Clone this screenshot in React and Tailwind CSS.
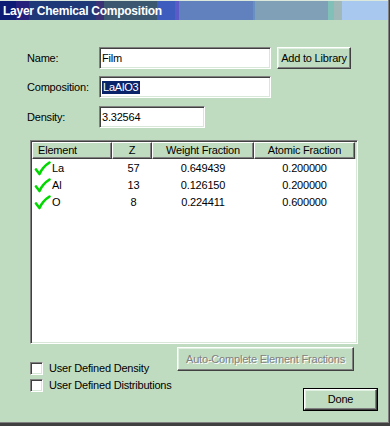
import React from "react";

const font = { fontFamily: '"Liberation Sans", Arial, sans-serif' };

function Check() {
  return (
    <svg width="17" height="15" viewBox="0 0 17 15" className="shrink-0">
      <path d="M2 8.5 L5.5 13 Q8.5 6 15.5 1.5" fill="none" stroke="#00d800" strokeWidth="2.6" strokeLinecap="round" strokeLinejoin="round" />
    </svg>
  );
}

function Input({ w, children }) {
  return (
    <div
      className={`${w} h-[22px] bg-white border border-t-[#808080] border-l-[#808080] border-b-white border-r-white shadow-[inset_1px_1px_0_#404040,inset_-1px_-1px_0_#d8e8d8] flex items-center pl-[2px] text-[11px] text-black`}
    >
      {children}
    </div>
  );
}

function Label({ children }) {
  return <div className="w-[72px] ml-[27px] text-[11px] text-black">{children}</div>;
}

function RaisedBtn({ className, children, disabled }) {
  return (
    <div
      className={`${className} bg-[#c0dcc0] border border-t-white border-l-white border-b-[#404040] border-r-[#404040] shadow-[inset_-1px_-1px_0_#808080,inset_1px_1px_0_#e0f0e0] flex items-center justify-center text-[11px] ${
        disabled ? "text-[#808080] [text-shadow:1px_1px_0_#ffffff]" : "text-black"
      }`}
    >
      {children}
    </div>
  );
}

function HeaderCell({ w, children, left }) {
  return (
    <div
      className={`${w} h-[17px] border border-t-white border-l-white border-b-[#404040] border-r-[#404040] shadow-[inset_-1px_-1px_0_#808080] flex items-center text-[11px] text-black ${
        left ? "pl-[5px]" : "justify-center"
      }`}
    >
      {children}
    </div>
  );
}

function CheckBox({ children }) {
  return (
    <div className="flex items-center h-[13px]">
      <div className="w-[13px] h-[13px] bg-white border border-t-[#808080] border-l-[#808080] border-b-white border-r-white shadow-[inset_1px_1px_0_#404040,inset_-1px_-1px_0_#d8e8d8]" />
      <div className="ml-[6px] text-[11px] text-black">{children}</div>
    </div>
  );
}

const rows = [
  ["La", "57", "0.649439", "0.200000"],
  ["Al", "13", "0.126150", "0.200000"],
  ["O", "8", "0.224411", "0.600000"],
];

export default function App() {
  return (
    <div className="w-[390px] h-[426px] bg-[#404040] tracking-[-0.2px]" style={font}>
      <div className="w-[389px] h-[423px] bg-[#808080]">
        <div className="w-[388px] h-[422px] bg-[#c0dcc0] border-t border-t-[#dce8dc] flex flex-col">
          <div className="h-[19px] bg-[linear-gradient(to_right,#0c1c74_0px,#0c1c74_16px,#24207c_16px,#24207c_29px,#1e3878_29px,#1e3878_96px,#3a3274_96px,#3a3274_104px,#3c5870_104px,#3c5870_157px,#3e5cbe_157px,#3e5cbe_175px,#5c5ac6_175px,#5c5ac6_179px,#6080be_179px,#6080be_253px,#6890c0_253px,#6890c0_255px,#80a0b8_255px,#80a0b8_328px,#80c0b8_328px,#80c0b8_334px,#a0b8b8_334px,#a0b8b8_342px,#a8c8f0_342px,#a8c8f0_100%)] flex items-center pl-[3px]">
            <span className="text-white font-bold text-[12px] tracking-[-0.25px]">Layer Chemical Composition</span>
          </div>

          <div className="mt-[27px] flex items-center">
            <Label>Name:</Label>
            <Input w="w-[172px]">Film</Input>
            <RaisedBtn className="ml-[6px] w-[74px] h-[22px]">Add to Library</RaisedBtn>
          </div>

          <div className="mt-[7px] flex items-center">
            <Label>Composition:</Label>
            <Input w="w-[172px]">
              <span className="bg-[#0a246a] text-white leading-[13px] px-[1px]">LaAlO3</span>
            </Input>
          </div>

          <div className="mt-[8px] flex items-center">
            <Label>Density:</Label>
            <Input w="w-[106px]">3.32564</Input>
          </div>

          <div className="mt-[12px] ml-[30px] w-[328px] h-[204px] bg-white border border-t-[#808080] border-l-[#808080] border-b-white border-r-white shadow-[inset_1px_1px_0_#404040,inset_-1px_-1px_0_#d8e8d8] p-[1px]">
            <div className="flex bg-[#c0dcc0]">
              <HeaderCell w="w-[80px]" left>Element</HeaderCell>
              <HeaderCell w="w-[40px]">Z</HeaderCell>
              <HeaderCell w="w-[102px]">Weight Fraction</HeaderCell>
              <HeaderCell w="w-[101px]">Atomic Fraction</HeaderCell>
            </div>
            <div className="pt-[1px]">
              {rows.map((r) => (
                <div key={r[0]} className="flex h-[17px] items-center text-[11px] text-black">
                  <div className="w-[80px] flex items-center pl-[2px]">
                    <Check />
                    <span className="ml-[1px]">{r[0]}</span>
                  </div>
                  <div className="w-[40px] text-center pl-[3px]">{r[1]}</div>
                  <div className="w-[102px] text-center">{r[2]}</div>
                  <div className="w-[101px] text-center">{r[3]}</div>
                </div>
              ))}
            </div>
          </div>

          <div className="flex mt-[3px]">
            <div className="ml-[30px] mt-[15px] flex flex-col gap-[4px]">
              <CheckBox>User Defined Density</CheckBox>
              <CheckBox>User Defined Distributions</CheckBox>
            </div>
            <div className="ml-auto mr-[10px] flex flex-col items-end">
              <RaisedBtn className="mr-[24px] w-[177px] h-[24px]" disabled>
                Auto-Complete Element Fractions
              </RaisedBtn>
              <div className="mt-[17px] w-[75px] h-[23px] border border-black">
                <RaisedBtn className="w-full h-full">Done</RaisedBtn>
              </div>
            </div>
          </div>
        </div>
      </div>
    </div>
  );
}
